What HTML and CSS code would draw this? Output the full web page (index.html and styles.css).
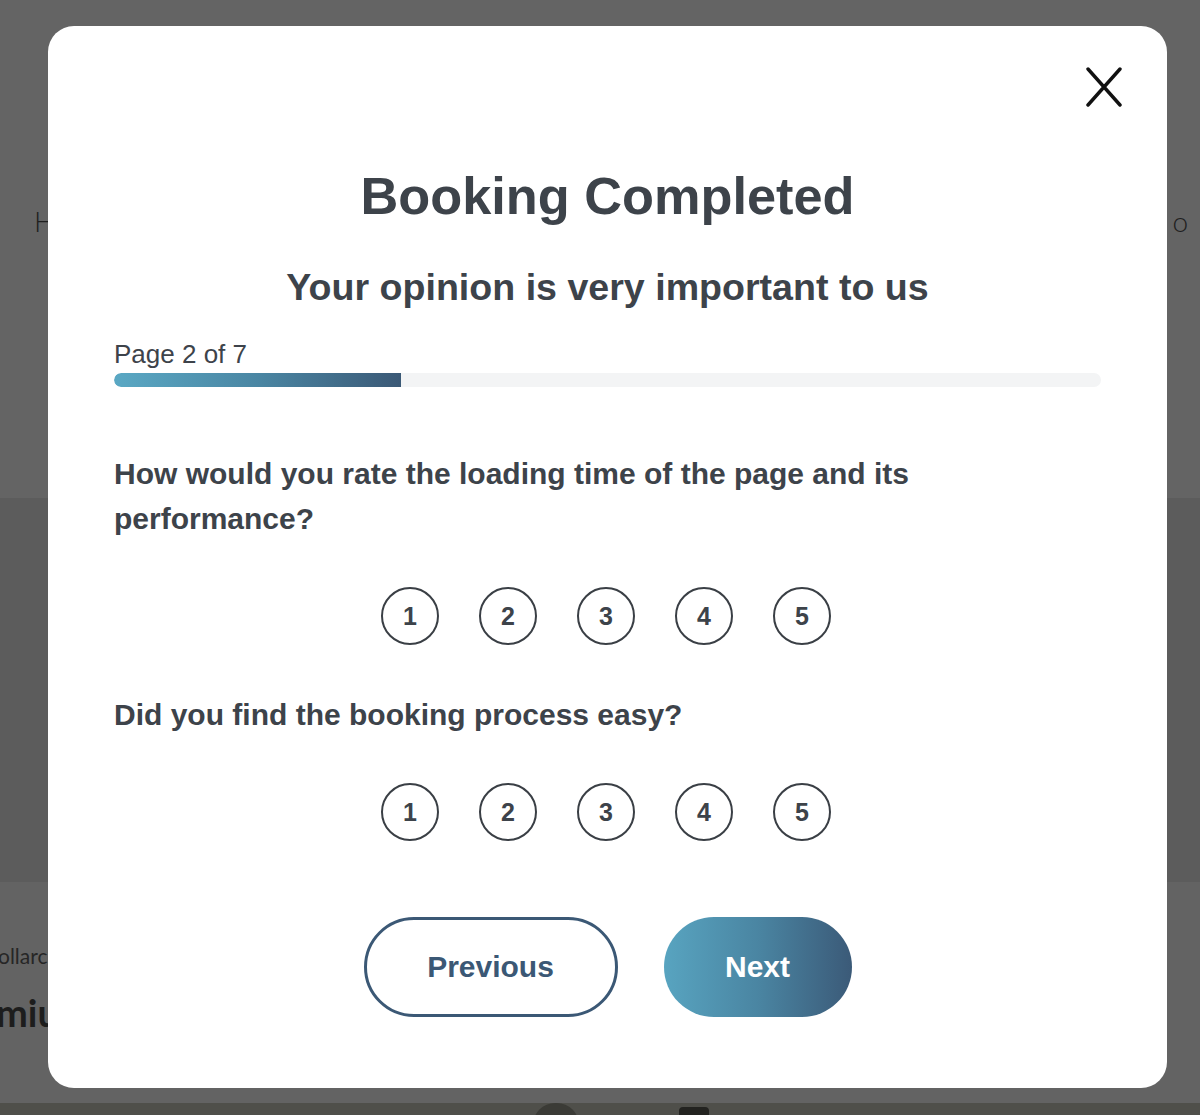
FILE: index.html
```html
<!DOCTYPE html>
<html lang="en">
<head>
<meta charset="utf-8">
<title>Booking Completed</title>
<link rel="stylesheet" href="styles.css">
</head>
<body>
<div class="page">
  <header class="page-top">
    <span class="page-top__left">H</span>
    <span class="page-top__right">o</span>
  </header>
  <section class="page-mid"></section>
  <section class="page-low">
    <p class="page-low__small">ollarc</p>
    <p class="page-low__big">miu</p>
  </section>
  <footer class="page-foot">
    <span class="page-foot__blob"></span>
    <span class="page-foot__cal"></span>
  </footer>
</div>

<div class="overlay">
  <div class="modal" role="dialog" aria-labelledby="modal-title">
    <div class="modal__close-row">
      <button class="modal__close" aria-label="Close">
        <svg width="38" height="40" viewBox="0 0 38 40" aria-hidden="true">
          <path d="M4 2 L36 38 M36 2 L4 38" stroke="#111" stroke-width="3.4" stroke-linecap="round" fill="none"/>
        </svg>
      </button>
    </div>

    <h1 class="modal__title" id="modal-title">Booking Completed</h1>
    <h2 class="modal__subtitle">Your opinion is very important to us</h2>

    <div class="progress">
      <div class="progress__label">Page 2 of 7</div>
      <div class="progress__track"><div class="progress__fill" style="width: 29.1%"></div></div>
    </div>

    <div class="question">
      <p class="question__text">How would you rate the loading time of the page and its performance?</p>
      <div class="rating">
        <button class="rating__item">1</button>
        <button class="rating__item">2</button>
        <button class="rating__item">3</button>
        <button class="rating__item">4</button>
        <button class="rating__item">5</button>
      </div>
    </div>

    <div class="question">
      <p class="question__text">Did you find the booking process easy?</p>
      <div class="rating">
        <button class="rating__item">1</button>
        <button class="rating__item">2</button>
        <button class="rating__item">3</button>
        <button class="rating__item">4</button>
        <button class="rating__item">5</button>
      </div>
    </div>

    <div class="actions">
      <button class="btn btn--outline">Previous</button>
      <button class="btn btn--filled">Next</button>
    </div>
  </div>
</div>
</body>
</html>
```

FILE: styles.css
```css
* { box-sizing: border-box; }

html, body {
  margin: 0;
  padding: 0;
}

body {
  width: 1200px;
  height: 1115px;
  overflow: hidden;
  background: #646464;
  font-family: "Liberation Sans", Arial, Helvetica, sans-serif;
  position: relative;
}

/* ---------- dimmed page behind ---------- */
.page {
  display: flex;
  flex-direction: column;
  height: 1115px;
}

.page-top {
  height: 498px;
  background: #646464;
  display: flex;
  justify-content: space-between;
  align-items: flex-start;
  padding: 204px 12px 0 34px;
  font-family: "Lato", "Liberation Sans", sans-serif;
  font-size: 28px;
  color: #1f1f1f;
  font-weight: 300;
}

.page-mid {
  height: 384px;
  background: #5c5c5c;
}

.page-low {
  height: 221px;
  background: #636363;
  padding-top: 60px;
  font-family: "Lato", "Liberation Sans", sans-serif;
  color: #1e1e1e;
}

.page-low__small {
  margin: 0 0 0 -2px;
  font-size: 21px;
  line-height: 28px;
  color: #262626;
}

.page-low__big {
  margin: 20px 0 0 -4px;
  font-size: 38px;
  line-height: 44px;
  font-weight: 700;
  color: #1d1d1d;
}

.page-foot {
  height: 12px;
  background: #4f4f4a;
  display: flex;
  align-items: flex-start;
  padding-left: 533px;
  gap: 100px;
}

.page-foot__blob {
  width: 46px;
  height: 24px;
  background: #3b3b36;
  border-radius: 22px 22px 0 0;
}

.page-foot__cal {
  margin-top: 4px;
  width: 30px;
  height: 10px;
  border-radius: 4px 4px 0 0;
  background: #232320;
}

/* ---------- modal ---------- */
.overlay {
  position: absolute;
  inset: 0;
  padding: 26px 0 0 48px;
}

.modal {
  width: 1119px;
  height: 1062px;
  background: #ffffff;
  border-radius: 26px;
  padding: 0 66px;
  color: #3d434a;
  display: flex;
  flex-direction: column;
}

.modal__close-row {
  display: flex;
  justify-content: flex-end;
  margin: 41px -21px 0 0;
  height: 40px;
}

.modal__close {
  border: 0;
  background: none;
  padding: 0;
  width: 38px;
  height: 40px;
  cursor: pointer;
}

.modal__close svg { display: block; }

.modal__title {
  margin: 58px 0 0;
  text-align: center;
  font-size: 52.3px;
  line-height: 62px;
  font-weight: 700;
  color: #3d434a;
}

.modal__subtitle {
  margin: 38px 0 0;
  text-align: center;
  font-size: 37.6px;
  line-height: 44px;
  font-weight: 700;
  color: #3d434a;
}

/* ---------- progress ---------- */
.progress {
  margin-top: 30px;
}

.progress__label {
  font-size: 26px;
  line-height: 30px;
  color: #3d434a;
}

.progress__track {
  margin-top: 4px;
  height: 14px;
  border-radius: 7px;
  background: #f3f4f5;
  overflow: hidden;
}

.progress__fill {
  height: 100%;
  background: linear-gradient(90deg, #5aa8c4 0%, #4a86a3 50%, #3b5976 100%);
  border-radius: 7px 0 0 7px;
}

/* ---------- questions ---------- */
.question {
  margin-top: 64px;
}

.question + .question {
  margin-top: 47px;
}

.question__text {
  margin: 0;
  font-size: 30px;
  line-height: 45px;
  font-weight: 700;
  color: #3d434a;
}

.rating {
  margin-top: 46px;
  padding-right: 3px;
  display: flex;
  justify-content: center;
  gap: 40px;
}

.rating__item {
  width: 58px;
  height: 58px;
  border-radius: 50%;
  border: 2px solid #3a3f45;
  background: #ffffff;
  font-family: "Liberation Sans", Arial, sans-serif;
  font-size: 25px;
  font-weight: 700;
  color: #3d434a;
  display: flex;
  align-items: center;
  justify-content: center;
  padding: 0;
  cursor: pointer;
}

/* ---------- actions ---------- */
.actions {
  margin-top: 76px;
  display: flex;
  justify-content: center;
  gap: 46px;
}

.btn {
  height: 100px;
  border-radius: 50px;
  font-family: "Liberation Sans", Arial, sans-serif;
  font-size: 30px;
  font-weight: 700;
  cursor: pointer;
  padding: 0;
}

.btn--outline {
  width: 254px;
  background: #ffffff;
  border: 3px solid #3b5875;
  color: #3b5875;
}

.btn--filled {
  width: 188px;
  border: 0;
  color: #ffffff;
  background: linear-gradient(90deg, #58a4c0 0%, #4a85a2 50%, #3b5a78 100%);
}
```
